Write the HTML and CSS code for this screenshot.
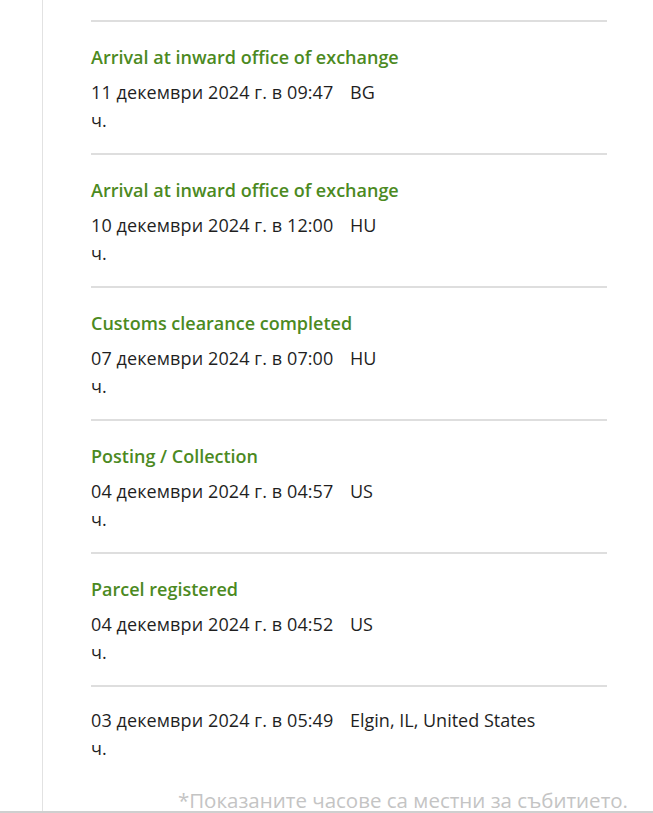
FILE: index.html
```html
<!DOCTYPE html>
<html lang="bg">
<head>
    <meta charset="UTF-8">
    <meta name="viewport" content="width=device-width, initial-scale=1.0">
    <title>Проследяване на пратка</title>
    <link rel="stylesheet" href="styles.css">
</head>
<body>
    <div class="page">
        <div class="tracking">
            <ul class="events">
                <li class="event">
                    <div class="event-title">Arrival at inward office of exchange</div>
                    <div class="event-row">
                        <span class="event-date">11 декември 2024 г. в 09:47 ч.</span>
                        <span class="event-place">BG</span>
                    </div>
                </li>
                <li class="event">
                    <div class="event-title">Arrival at inward office of exchange</div>
                    <div class="event-row">
                        <span class="event-date">10 декември 2024 г. в 12:00 ч.</span>
                        <span class="event-place">HU</span>
                    </div>
                </li>
                <li class="event">
                    <div class="event-title">Customs clearance completed</div>
                    <div class="event-row">
                        <span class="event-date">07 декември 2024 г. в 07:00 ч.</span>
                        <span class="event-place">HU</span>
                    </div>
                </li>
                <li class="event">
                    <div class="event-title">Posting / Collection</div>
                    <div class="event-row">
                        <span class="event-date">04 декември 2024 г. в 04:57 ч.</span>
                        <span class="event-place">US</span>
                    </div>
                </li>
                <li class="event">
                    <div class="event-title">Parcel registered</div>
                    <div class="event-row">
                        <span class="event-date">04 декември 2024 г. в 04:52 ч.</span>
                        <span class="event-place">US</span>
                    </div>
                </li>
                <li class="event event-notitle">
                    <div class="event-row">
                        <span class="event-date">03 декември 2024 г. в 05:49 ч.</span>
                        <span class="event-place">Elgin, IL, United States</span>
                    </div>
                </li>
            </ul>
            <p class="note">*Показаните часове са местни за събитието.</p>
        </div>
    </div>
</body>
</html>
```

FILE: styles.css
```css
/* Основни стилове */
body {
    margin: 0;
    background: #fff;
    font-family: 'Open Sans', 'Noto Sans', sans-serif;
    color: #1f1f1f;
}

.page {
    height: 813px;
    border-bottom: 2px solid #cfcfcf;
    box-sizing: border-box;
    overflow: hidden;
}

.tracking {
    margin-left: 42px;
    border-left: 1px solid #e2e2e2;
    height: 100%;
    padding-top: 20px;
    box-sizing: border-box;
}

.events {
    list-style: none;
    margin: 0;
    padding: 0 46px 0 48px;
}

.event {
    border-top: 2px solid #dedede;
    padding: 23px 0 19px;
}

.event-notitle {
    padding-top: 19px;
}

.event-title {
    color: #4c8a1f;
    font-weight: 600;
    font-size: 18px;
    line-height: 24px;
    margin-bottom: 9px;
}

.event-row {
    display: flex;
    font-size: 18px;
    line-height: 28px;
}

.event-date {
    flex: 0 0 256px;
    margin-right: 3px;
    letter-spacing: 0.1px;
}

/* Бележка под списъка */
.note {
    margin: 6px 25px 0 0;
    text-align: right;
    color: #c4c4c4;
    font-size: 20.5px;
    line-height: 26px;
}
```
